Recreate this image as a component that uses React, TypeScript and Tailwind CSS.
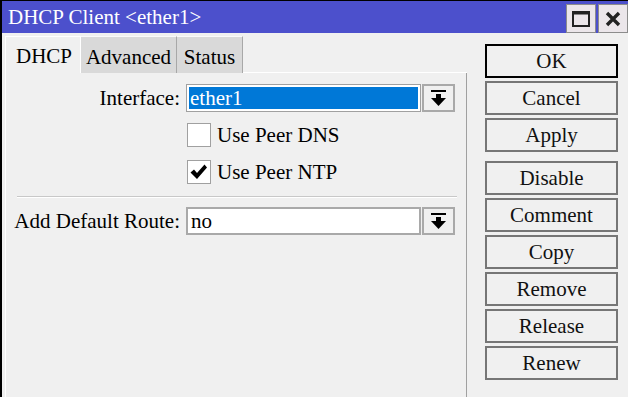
import React from 'react';

const serif = { fontFamily: '"Liberation Serif", "Times New Roman", serif' };

const DropButton = () => (
  <div className="w-[33px] h-[28px] ml-[1px] bg-[#f0f0f0] border-2 border-[#a9a9a9] flex items-center justify-center">
    <svg width="29" height="24" viewBox="0 0 29 24">
      <rect x="7" y="4" width="15" height="2" fill="#000" />
      <polygon points="12,8 17,8 17,12 22,12 14.5,20 7,12 12,12" fill="#000" />
    </svg>
  </div>
);

const CheckBox = ({ checked, label }: { checked: boolean; label: string }) => (
  <div className="flex items-center h-[24px] pl-[181px]">
    <div className="w-[24px] h-[24px] bg-white border-[1.5px] border-[#a0a0a0] flex items-center justify-center">
      {checked && (
        <svg width="18" height="18" viewBox="0 0 18 18">
          <polygon points="0.5,9.5 4,6.5 7,10 14.5,1.5 17,4.5 7,16" fill="#000" />
        </svg>
      )}
    </div>
    <span className="ml-[6px] text-[21px] leading-none text-black">{label}</span>
  </div>
);

const DlgButton = ({ label, main = false }: { label: string; main?: boolean }) => (
  <div
    className={`
      w-[133px] h-[34px]
      flex items-center justify-center
      text-[21px] leading-none text-[#111]
      bg-[#f0f0f0]
      ${main ? 'border-2 border-black' : 'border-2 border-[#767676]'}
    `}
  >
    {label}
  </div>
);

export default function App() {
  return (
    <div className="w-[628px] h-[397px] overflow-hidden bg-[#f0f0f0] border-l-2 border-t border-black flex flex-col" style={serif}>
      {/* Barra de título */}
      <div className="h-[32px] bg-[#4c50cc] flex items-start shrink-0">
        <div className="flex-1 pl-[6px] pt-[6px] text-[21px] leading-none text-white whitespace-nowrap">
          DHCP Client &lt;ether1&gt;
        </div>
        <div className="flex gap-[2px] pt-[3px]">
          <div className="w-[30px] h-[29px] bg-[#ebe6ea] border border-[#8c8c8c] flex items-center justify-center">
            <svg width="18" height="16" viewBox="0 0 18 16">
              <rect x="1" y="1.5" width="16" height="13.5" fill="none" stroke="#222" strokeWidth="2" />
              <rect x="0" y="0" width="18" height="3.5" fill="#222" />
            </svg>
          </div>
          <div className="w-[30px] h-[29px] bg-[#ebe6ea] border border-[#8c8c8c] flex items-center justify-center">
            <svg width="16" height="16" viewBox="0 0 16 16">
              <path d="M2 2 L14 14 M14 2 L2 14" stroke="#222" strokeWidth="3.4" />
            </svg>
          </div>
        </div>
      </div>

      <div className="flex flex-1 min-h-0">
        {/* Panel izquierdo con pestañas */}
        <div className="w-[465px] pl-[3px] pt-[3px] flex flex-col">
          <div className="flex h-[37px] items-stretch text-[21px] leading-none text-black">
            <div className="w-[76px] bg-[#f0f0f0] border-l border-t border-r border-white flex items-center pl-[10px] pt-[2px]">
              DHCP
            </div>
            <div className="w-[96px] bg-[#d9d9d9] border-t border-r border-[#fafafa] border-r-[#a8a8a8] flex items-center justify-center pt-[4px]">
              Advanced
            </div>
            <div className="w-[66px] bg-[#d9d9d9] border-t border-r border-[#fafafa] border-r-[#a8a8a8] flex items-center justify-center pt-[4px]">
              Status
            </div>
            <div className="flex-1 border-b border-white" />
          </div>

          <div className="flex-1 border-l border-white border-r border-r-[#a0a0a0] flex flex-col pt-[11px] text-[21px] leading-none text-black">
            <div className="flex items-center h-[28px]">
              <div className="w-[174px] text-right">Interface:</div>
              <div className="w-[235px] h-[28px] ml-[6px] border border-[#a0a0a0] bg-white p-[2px]">
                <div className="h-full bg-[#0078d7] text-white flex items-center pl-[1px]">ether1</div>
              </div>
              <DropButton />
            </div>

            <div className="mt-[11px]">
              <CheckBox checked={false} label="Use Peer DNS" />
            </div>
            <div className="mt-[13px]">
              <CheckBox checked={true} label="Use Peer NTP" />
            </div>

            <div className="mt-[12px] ml-[11px] w-[440px] h-[2px] border-t border-[#c8c8c8] border-b border-b-white" />

            <div className="flex items-center h-[28px] mt-[9px]">
              <div className="w-[174px] text-right whitespace-nowrap">Add Default Route:</div>
              <div className="w-[235px] h-[28px] ml-[6px] border-2 border-[#a9a9a9] bg-white flex items-center pl-[3px]">
                no
              </div>
              <DropButton />
            </div>
          </div>
        </div>

        {/* Columna de botones */}
        <div className="pl-[18px] pt-[11px] flex flex-col">
          <DlgButton label="OK" main />
          <div className="flex flex-col gap-[3px] mt-[3px]">
            <DlgButton label="Cancel" />
            <DlgButton label="Apply" />
          </div>
          <div className="flex flex-col gap-[3px] mt-[9px]">
            <DlgButton label="Disable" />
            <DlgButton label="Comment" />
            <DlgButton label="Copy" />
            <DlgButton label="Remove" />
            <DlgButton label="Release" />
            <DlgButton label="Renew" />
          </div>
        </div>
      </div>
    </div>
  );
}
